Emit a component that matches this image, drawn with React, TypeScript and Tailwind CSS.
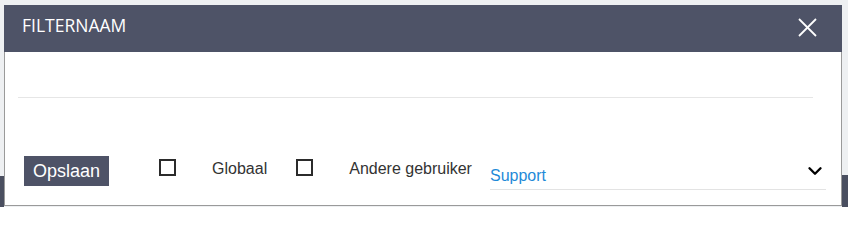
import { ChevronDown } from "lucide-react";

function Checkbox() {
  return <span className="mt-[3px] block h-[17px] w-[17px] border-2 border-[#2b2b2b] bg-white" />;
}

export default function App() {
  return (
    <div className="flex h-[207px] w-[848px] items-stretch bg-[#eef0f2] pt-[5px] font-['Liberation_Sans',Arial,sans-serif] text-[#333]">
      {/* Page behind, left edge */}
      <div className="flex w-[4px] flex-col justify-end">
        <div className="h-[31px] bg-[#4a4f60]" />
      </div>

      {/* Dialog */}
      <div className="flex h-[201px] w-[838px] flex-col border-x border-b border-[#9a9a9a] bg-white">
        <div className="-mx-px flex h-[47px] shrink-0 items-start justify-between bg-[#4e5367] pl-[18px] pr-[25px]">
          <h1 className="pt-[8px] font-['Open_Sans',sans-serif] text-[17.5px] leading-[24px] text-white">
            FILTERNAAM
          </h1>
          <button className="mt-[13px] text-white" aria-label="Sluiten">
            <svg width="19" height="19" viewBox="0 0 19 19" fill="none" stroke="currentColor" strokeWidth="1.8">
              <line x1="1" y1="1" x2="18" y2="18" />
              <line x1="18" y1="1" x2="1" y2="18" />
            </svg>
          </button>
        </div>

        {/* Name field line */}
        <div className="ml-[13px] mr-[28px] mt-[45px] h-px bg-[#e6e6e6]" />

        {/* Bottom row */}
        <div className="mt-[58px] flex items-start pr-[15px]">
          <button className="ml-[19px] h-[30px] bg-[#4e5367] px-[9px] text-[18px] leading-[30px] text-white">
            Opslaan
          </button>
          <div className="ml-[50px]">
            <Checkbox />
          </div>
          <span className="ml-[36px] mt-[3px] text-[16px] leading-[20px]">Globaal</span>
          <div className="ml-[29px]">
            <Checkbox />
          </div>
          <span className="ml-[36px] mt-[3px] text-[16px] leading-[20px]">Andere gebruiker</span>
          <div className="ml-[18px] mt-[10px] flex flex-1 items-start justify-between border-b border-[#e3e3e3] pb-[3px]">
            <span className="text-[16px] leading-[20px] text-[#1f8ad8]">Support</span>
            <ChevronDown className="-mt-[6px] h-[22px] w-[22px] text-black" strokeWidth={2.6} />
          </div>
        </div>
      </div>

      {/* Page behind, right edge */}
      <div className="flex w-[6px] flex-col justify-end">
        <div className="h-[32px] bg-[#4a4f60]" />
      </div>
    </div>
  );
}
